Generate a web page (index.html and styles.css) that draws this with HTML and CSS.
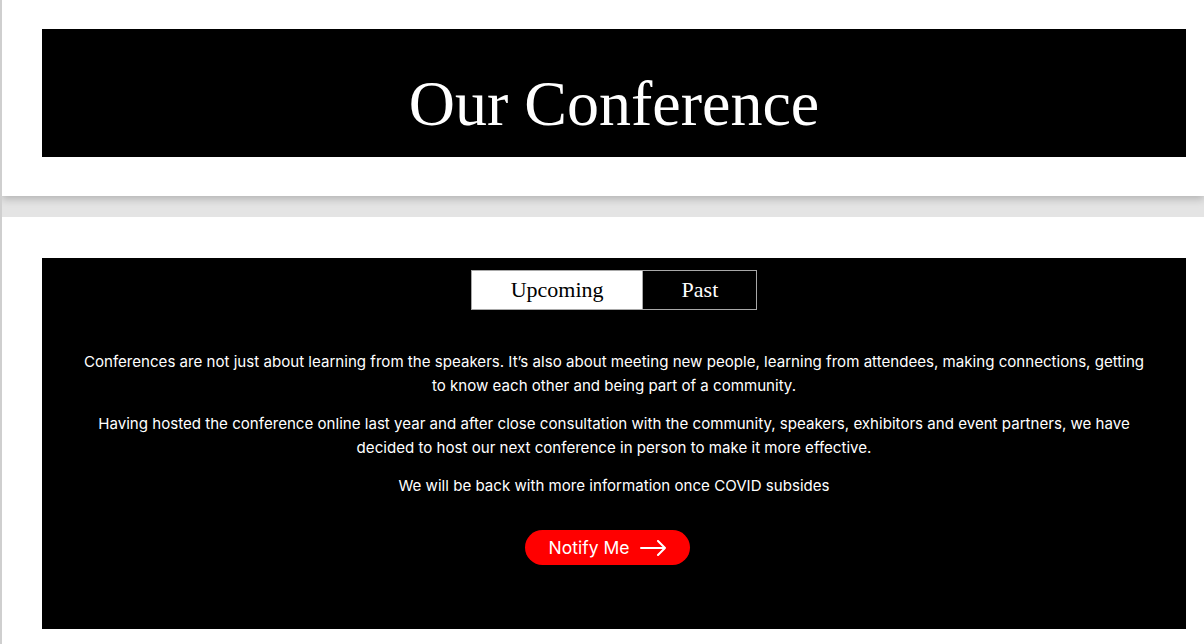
FILE: index.html
```html
<!DOCTYPE html>
<html lang="en">
<head>
<meta charset="utf-8">
<title>Our Conference</title>
<link rel="stylesheet" href="styles.css">
</head>
<body>
<div class="card card-top">
  <header class="hero">
    <h1 class="hero-title">Our Conference</h1>
  </header>
</div>
<div class="card card-bottom">
  <section class="panel">
    <div class="tabs">
      <button class="tab tab-active">Upcoming</button>
      <button class="tab">Past</button>
    </div>
    <div class="copy">
      <p>Conferences are not just about learning from the speakers. It’s also about meeting new people, learning from attendees, making connections, getting to know each other and being part of a community.</p>
      <p>Having hosted the conference online last year and after close consultation with the community, speakers, exhibitors and event partners, we have decided to host our next conference in person to make it more effective.</p>
      <p>We will be back with more information once COVID subsides</p>
    </div>
    <a class="notify" href="#">Notify Me
      <svg class="arrow" width="27" height="16" viewBox="0 0 27 16" fill="none" stroke="#fff" stroke-width="2" stroke-linecap="round" stroke-linejoin="round"><path d="M1 8h24M18 1l7 7-7 7"/></svg>
    </a>
  </section>
</div>
</body>
</html>
```
FILE: styles.css
```css
html, body {
  margin: 0;
  padding: 0;
}
body {
  background: #e4e4e4;
  border-left: 2px solid #cfcfcf;
  overflow: hidden;
}
.card {
  background: #fff;
}
.card-top {
  padding: 29px 18px 39px 40px;
  box-shadow: 0 3px 8px rgba(0, 0, 0, 0.22);
  position: relative;
  z-index: 1;
}
.card-bottom {
  margin-top: 21px;
  padding: 41px 18px 15px 40px;
}
.hero {
  background: #000;
  height: 128px;
  display: flex;
  align-items: center;
  justify-content: center;
}
.hero-title {
  margin: 0;
  color: #fff;
  font-family: "Liberation Serif", "Times New Roman", serif;
  font-weight: normal;
  font-size: 64px;
  line-height: 1;
  padding-top: 22px;
}
.panel {
  background: #000;
  height: 371px;
  box-sizing: border-box;
  padding: 12px 40px 0;
  display: flex;
  flex-direction: column;
  align-items: center;
}
.tabs {
  display: flex;
  border: 1px solid #a8a8a8;
}
.tab {
  font-family: "Liberation Serif", "Times New Roman", serif;
  font-size: 22px;
  height: 38px;
  padding: 0 38px 0 39px;
  border: none;
  background: #000;
  color: #fff;
  cursor: pointer;
}
.tab-active {
  background: #fff;
  color: #000;
  padding: 0 38px 0 39px;
}
.tab + .tab {
  border-left: 1px solid #a8a8a8;
}
.copy {
  margin-top: 40px;
  color: #fff;
  font-family: Inter, "Noto Sans", sans-serif;
  font-size: 15.1px;
  line-height: 24px;
  text-align: center;
}
.copy p {
  margin: 0 0 14px;
}
.copy p:last-child {
  margin-bottom: 0;
}
.notify {
  margin: 32px 13px 0 0;
  display: inline-flex;
  align-items: center;
  gap: 11px;
  height: 35px;
  padding: 0 23px 0 24px;
  background: #ff0000;
  color: #fff;
  border-radius: 18px;
  text-decoration: none;
  font-family: Inter, "Noto Sans", sans-serif;
  font-size: 17.5px;
}
.arrow {
  display: block;
}
```
